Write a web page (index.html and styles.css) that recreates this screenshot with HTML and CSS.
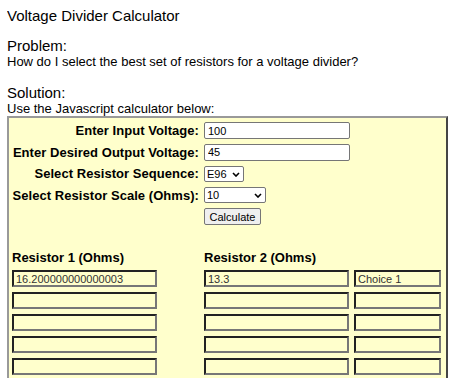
FILE: index.html
```html
<!DOCTYPE html>
<html>
<head>
<meta charset="utf-8">
<link rel="stylesheet" href="styles.css">
</head>
<body>
<div class="title">Voltage Divider Calculator</div>
<div class="head">Problem:</div>
<div class="text">How do I select the best set of resistors for a voltage divider?</div>
<div class="head">Solution:</div>
<div class="text text-last">Use the Javascript calculator below:</div>
<div class="calc">
  <div class="form">
    <label class="lbl">Enter Input Voltage:</label>
    <div class="cell"><input class="inp" type="text" value="100"></div>
    <label class="lbl">Enter Desired Output Voltage:</label>
    <div class="cell"><input class="inp" type="text" value="45"></div>
    <label class="lbl">Select Resistor Sequence:</label>
    <div class="cell"><span class="selwrap"><select class="sel sel-seq"><option>E96</option></select><svg class="chev" width="8" height="5" viewBox="0 0 8 5"><path d="M1 1 L4 4 L7 1" fill="none" stroke="#000" stroke-width="1.6"/></svg></span></div>
    <label class="lbl">Select Resistor Scale (Ohms):</label>
    <div class="cell"><span class="selwrap"><select class="sel sel-scale"><option>10</option></select><svg class="chev" width="8" height="5" viewBox="0 0 8 5"><path d="M1 1 L4 4 L7 1" fill="none" stroke="#000" stroke-width="1.6"/></svg></span></div>
    <span></span>
    <div class="cell"><button class="btn" type="button">Calculate</button></div>
  </div>
  <div class="results">
    <div class="rh">Resistor 1 (Ohms)</div>
    <div class="rh">Resistor 2 (Ohms)</div>
    <div></div>
    <input class="out" type="text" value="16.200000000000003">
    <input class="out" type="text" value="13.3">
    <input class="out small" type="text" value="Choice 1">
    <input class="out" type="text"><input class="out" type="text"><input class="out small" type="text">
    <input class="out" type="text"><input class="out" type="text"><input class="out small" type="text">
    <input class="out" type="text"><input class="out" type="text"><input class="out small" type="text">
    <input class="out" type="text"><input class="out" type="text"><input class="out small" type="text">
  </div>
</div>
</body>
</html>
```
FILE: styles.css
```css
body {
  margin: 7px 2px 0 7px;
  font-family: "Liberation Sans", Arial, sans-serif;
  color: #000;
  background: #fff;
}
.title {
  font-size: 15px;
  line-height: 17px;
  margin-bottom: 13px;
}
.head {
  font-size: 15px;
  line-height: 17px;
}
.text {
  font-size: 13px;
  line-height: 15px;
  margin-bottom: 15px;
}
.text-last { margin-bottom: 0; }
.calc {
  background: #ffffcc;
  border: 2px outset #999;
  padding: 2px 3px 0 3px;
  height: 280px;
  box-sizing: border-box;
}
.form {
  display: grid;
  grid-template-columns: 187px auto;
  grid-auto-rows: 21.5px;
  column-gap: 5px;
  align-items: center;
}
.cell {
  display: flex;
  align-items: center;
}
.lbl {
  text-align: right;
  font-weight: bold;
  font-size: 13px;
  line-height: 15px;
  white-space: nowrap;
  letter-spacing: 0.05px;
}
.inp {
  width: 146px;
  height: 17px;
  box-sizing: border-box;
  font: 11px "Liberation Sans", Arial, sans-serif;
  border: 1px solid #767676;
  border-radius: 2px;
  padding: 0 3px;
  margin: 0;
  background: #fff;
}
.selwrap {
  position: relative;
  display: inline-flex;
}
.sel {
  appearance: none;
  -webkit-appearance: none;
  height: 16px;
  font: 11px "Liberation Sans", Arial, sans-serif;
  color: #000;
  border: 1px solid #767676;
  border-radius: 2px;
  background: #fff;
  margin: 0;
  padding: 0 0 0 2px;
  box-sizing: border-box;
}
.chev {
  position: absolute;
  right: 4px;
  top: 6px;
  pointer-events: none;
}
.sel-seq { width: 40px; }
.sel-scale { width: 62px; }
.btn {
  font: 11px "Liberation Sans", Arial, sans-serif;
  color: #000;
  height: 17px;
  width: 57px;
  padding: 0;
  margin: 0;
  border: 1px solid #767676;
  border-radius: 2px;
  background: #efefef;
}
.results {
  display: grid;
  grid-template-columns: 192px 150px 88px;
  row-gap: 5px;
  margin-top: 22px;
  align-items: end;
}
.rh {
  font-weight: bold;
  font-size: 13px;
  line-height: 15px;
  margin-bottom: 0.5px;
}
.out {
  width: 145px;
  height: 17px;
  box-sizing: border-box;
  font: 11px "Liberation Sans", Arial, sans-serif;
  color: #333;
  background: #ffffcc;
  border: 2px inset #777;
  padding: 0 2px;
  margin: 0;
}
.out.small { width: 87px; }
```
